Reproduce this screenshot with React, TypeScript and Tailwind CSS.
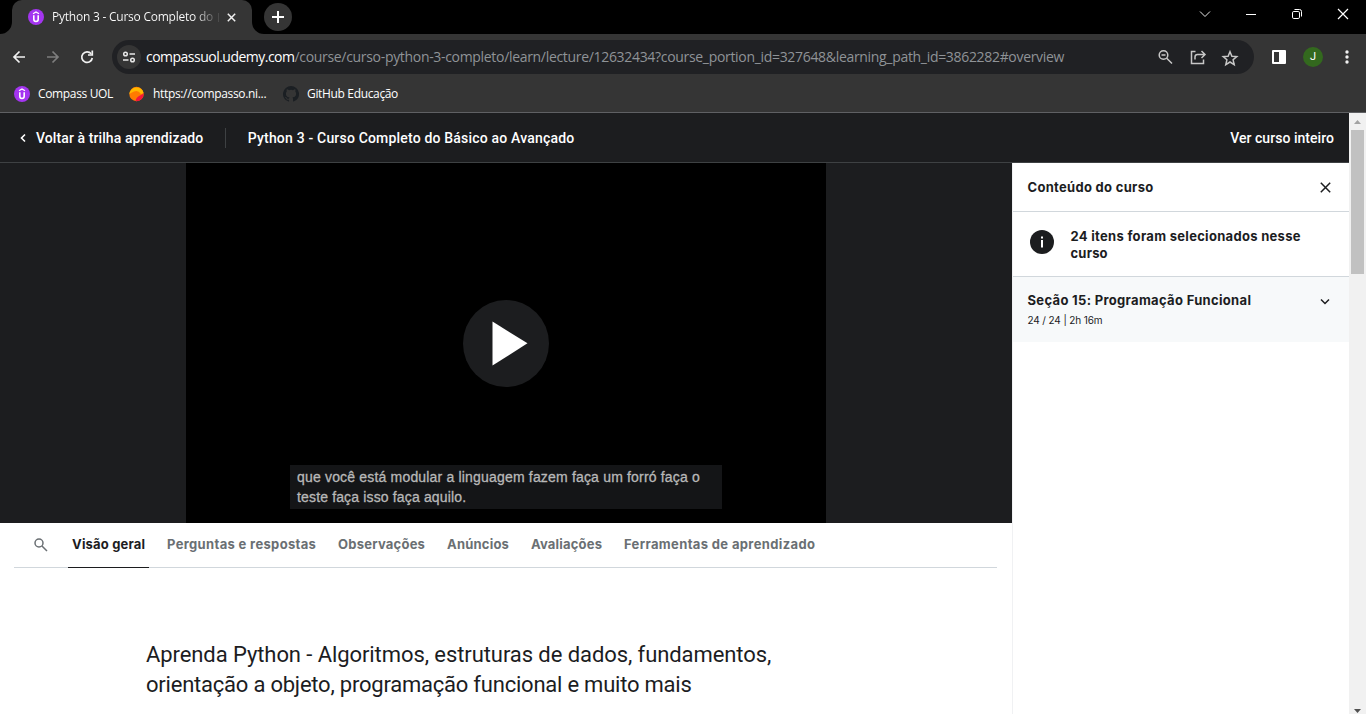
import type { ReactNode } from "react";

function Label({ className, children }: { className?: string; children: ReactNode }) {
  return <span className={"whitespace-nowrap " + (className ?? "")}>{children}</span>;
}

function UdemyBadge() {
  return (
    <svg width="16" height="16" viewBox="0 0 16 16" className="shrink-0">
      <circle cx="8" cy="8" r="8" fill="#a435f0" />
      <path d="M5 4.700 8 3l3 1.700" stroke="#fff" strokeWidth="1.300" fill="none" />
      <path d="M5.800 6.300v4a2.200 2.200 0 0 0 4.400 0v-4" stroke="#fff" strokeWidth="1.600" fill="none" />
    </svg>
  );
}

function TabStrip() {
  return (
    <div className="flex h-[34px] shrink-0 items-stretch bg-black">
      <svg width="12" height="34" className="shrink-0"><path d="M12 34V22A12 12 0 0 1 0 34z" fill="#353535" /></svg>
      <div className="flex w-[240px] items-center rounded-t-[10px] bg-[#353535] pl-4">
        <UdemyBadge />
        <div className="ml-2 flex w-[168px] items-center bg-gradient-to-r from-white from-85% to-[#353535] bg-clip-text font-['Open_Sans',sans-serif] text-[12px] leading-[18px] text-transparent">
          <Label className="tracking-[-0.235px]">Python 3 - Curso Completo do</Label>
        </div>
        <div className="-ml-[2px] h-[9px] w-px bg-[#4c4c4c]" />
        <svg width="9" height="9" viewBox="0 0 9 9" className="ml-[8px] shrink-0"><path d="M.8.8l7.4 7.4M8.2.8L.8 8.2" stroke="#f1f1f1" strokeWidth="1.500" /></svg>
      </div>
      <svg width="12" height="34" className="shrink-0"><path d="M0 34V22A12 12 0 0 0 12 34z" fill="#353535" /></svg>
      <div className="mt-[3px] flex size-7 items-center justify-center rounded-full bg-[#353535]">
        <svg width="12" height="12"><path d="M6 0v12M0 6h12" stroke="#fff" strokeWidth="2" /></svg>
      </div>
      <div className="ml-auto flex items-center pb-[6px]">
        <svg width="46" height="28" fill="none" stroke="#e8e8e8"><path d="M18 11.500l5 5 5-5" /></svg>
        <svg width="46" height="28" fill="none" stroke="#fff"><path d="M18 14.500h10" /></svg>
        <svg width="46" height="28" fill="none" stroke="#fff"><rect x="18.500" y="11.500" width="7" height="7" rx="1.300" /><path d="M20.500 9.500h5a2 2 0 0 1 2 2v5" /></svg>
        <svg width="46" height="28" fill="none" stroke="#fff" strokeWidth="1.200"><path d="M18 9l10 10M28 9l-10 10" /></svg>
      </div>
    </div>
  );
}

function AddressBar() {
  return (
    <div className="flex h-[46px] shrink-0 items-center bg-[#353535]">
      <svg width="112" height="46" fill="none" stroke="#f1f1f1" strokeWidth="1.700">
        <path d="M25 23H14.500M19.500 17.500L14 23l5.500 5.500" />
        <path d="M47 23h10.500M52.500 17.500L58 23l-5.500 5.500" stroke="#7e7e7e" />
        <path d="M91.200 19.800A5.300 5.300 0 1 0 92.300 24" /><path d="M88 21h4.300v-4.500" />
      </svg>
      <div className="flex h-[34px] w-[1142px] items-center rounded-full bg-[#202124] pl-[5px]">
        <div className="flex size-6 items-center justify-center rounded-full bg-[#353535]">
          <svg width="14" height="12" fill="none" stroke="#e8e8e8" strokeWidth="1.500"><circle cx="3.500" cy="3" r="1.800" /><path d="M7.500 3h5.500M1 9h5.500" /><circle cx="10.500" cy="9" r="1.800" /></svg>
        </div>
        <div className="ml-[5px] flex font-['Open_Sans',sans-serif] text-[14px] leading-5">
          <Label className="tracking-[-0.515px] text-white">compassuol.udemy.com</Label>
          <Label className="tracking-[-0.316px] text-[#8f9397]">/course/curso-python-3-completo/learn/lecture/12632434?course_portion_id=327648&learning_path_id=3862282#overview</Label>
        </div>
        <svg width="90" height="34" className="ml-auto mr-[10px]" fill="none" stroke="#c7c7c7" strokeWidth="1.500">
          <circle cx="9.500" cy="15" r="4.300" /><path d="M7.500 15h4M12.700 18.200l5.300 5.300" />
          <path d="M41.500 11.500h-4v12h12v-4M41 19.500v-2.500a2.500 2.500 0 0 1 2.500-2.500H50M47.500 11l3.500 3.500-3.500 3.500" />
          <path d="M76 11.700l1.900 4.500 4.900.4-3.700 3.200 1.100 4.800L76 22l-4.200 2.600 1.100-4.800-3.700-3.200 4.900-.4z" />
        </svg>
      </div>
      <svg width="14" height="14" className="ml-[18px]"><rect width="14" height="14" rx="1" fill="#fff" /><rect x="2" y="2" width="5" height="10" fill="#353535" /></svg>
      <div className="ml-[17px] flex size-5 items-center justify-center rounded-full bg-[#33691e] font-['Roboto',sans-serif] text-[11px] text-white">J</div>
      <svg width="4" height="14" className="ml-[22px]" fill="#f1f1f1"><circle cx="2" cy="2" r="1.700" /><circle cx="2" cy="7" r="1.700" /><circle cx="2" cy="12" r="1.700" /></svg>
    </div>
  );
}

function Bookmarks() {
  return (
    <div className="flex h-[33px] shrink-0 items-start border-b border-[#5f6063] bg-[#353535] pl-[14px] pt-[6px] font-['Open_Sans',sans-serif] text-[12px] leading-4 text-white">
      <div className="flex w-[115px] gap-2"><UdemyBadge /><Label className="tracking-[-0.345px]">Compass UOL</Label></div>
      <div className="flex w-[154px] gap-[9px]">
        <svg width="15" height="16" viewBox="0 0 15 16"><circle cx="7.500" cy="8" r="7.200" fill="#ff7a00" /><path d="M.4 8A7.200 7.200 0 0 1 14.600 7L12 8Q9 3.500 5 5.500 2 6.500.4 8z" fill="#ffb800" /><path d="M14.700 7.500A7.200 7.200 0 0 1 6.500 15.100Q7 11 11 9.500z" fill="#f5163b" /></svg>
        <Label className="tracking-[-0.34px]">https://compasso.ni...</Label>
      </div>
      <div className="flex gap-2">
        <svg width="16" height="16" viewBox="0 0 16 16" fill="#1b1f23"><path d="M8 0a8 8 0 0 0-2.530 15.590c.4.070.55-.17.55-.38v-1.490c-2.010.37-2.530-.49-2.690-.94-.09-.23-.48-.94-.82-1.130-.28-.15-.68-.52-.01-.53.630-.01 1.080.58 1.230.82.720 1.210 1.870.87 2.330.66.070-.52.280-.87.510-1.070-1.780-.2-3.640-.89-3.640-3.950 0-.87.310-1.590.82-2.150-.08-.2-.36-1.020.08-2.120 0 0 .67-.21 2.200.82a7.400 7.400 0 0 1 4 0c1.530-1.040 2.200-.82 2.200-.82.440 1.100.16 1.920.08 2.120.51.560.82 1.270.82 2.150 0 3.070-1.870 3.750-3.650 3.950.29.250.54.730.54 1.480v2.200c0 .21.150.46.550.38A8 8 0 0 0 8 0z" /></svg>
        <Label className="tracking-[-0.342px]">GitHub Educação</Label>
      </div>
    </div>
  );
}

function CourseHeader() {
  return (
    <header className="flex h-[50px] shrink-0 items-center border-b border-[#3e4143] bg-[#1c1d1f] pl-5 pr-[15px] font-['Roboto',sans-serif] text-[14px] font-medium leading-5 text-white">
      <svg width="6" height="10" fill="none" stroke="#fff" strokeWidth="1.600"><path d="M5 1.500L1.500 5 5 8.500" /></svg>
      <Label className="ml-[10px] tracking-[0.09px]">Voltar à trilha aprendizado</Label>
      <div className="ml-[22px] h-5 w-px bg-[#3e4143]" />
      <Label className="ml-[21.500px] tracking-[0.185px]">Python 3 - Curso Completo do Básico ao Avançado</Label>
      <Label className="ml-auto tracking-[0.04px]">Ver curso inteiro</Label>
    </header>
  );
}

function Player() {
  return (
    <div className="flex h-[360px] shrink-0 justify-center bg-[#1c1d1f]">
      <div className="relative flex w-[640px] items-center justify-center bg-black">
        <svg width="86" height="87"><ellipse cx="43" cy="43.500" rx="43" ry="43.500" fill="#1c1d1f" /><path d="M29.500 21.500v44l35-22.200z" fill="#fff" /></svg>
        <div className="absolute left-[104px] top-[302px] flex h-[44px] w-[432px] flex-col items-start bg-[#141517] pl-[7px] pt-[2px] font-['Liberation_Sans',sans-serif] text-[14px] leading-5 text-[#b8b8b8] [-webkit-text-stroke:0.3px_#b8b8b8]">
          <Label className="tracking-[0.18px]">que você está modular a linguagem fazem faça um forró faça o</Label>
          <Label className="tracking-[0.15px]">teste faça isso faça aquilo.</Label>
        </div>
      </div>
    </div>
  );
}

function Tabs() {
  return (
    <nav className="mx-[14px] flex h-[45px] w-[983px] shrink-0 items-stretch border-b border-[#d1d7dc] font-['Inter',sans-serif] text-[13px] font-bold leading-[43px] text-[#6a6f73]">
      <svg width="54" height="44" fill="none" stroke="#6a6f73" strokeWidth="1.500"><circle cx="25" cy="20" r="4" /><path d="M28 23l5 5" /></svg>
      <div className="-mb-px w-[81px] border-b border-[#1c1d1f] px-1 text-[#1c1d1f]"><Label className="tracking-[0.17px]">Visão geral</Label></div>
      <div className="ml-[18px] flex gap-[22px]">
        <Label className="w-[149px] tracking-[0.34px]">Perguntas e respostas</Label>
        <Label className="w-[87px] tracking-[0.23px]">Observações</Label>
        <Label className="w-[62px] tracking-[0.21px]">Anúncios</Label>
        <Label className="w-[71px] tracking-[0.19px]">Avaliações</Label>
        <Label className="w-[192px] tracking-[0.36px]">Ferramentas de aprendizado</Label>
      </div>
    </nav>
  );
}

function Sidebar() {
  return (
    <aside className="flex w-[337px] shrink-0 flex-col border-l border-[#f0f1f3] bg-white font-['Inter',sans-serif] text-[13px] font-bold text-[#1c1d1f]">
      <div className="flex h-[49px] items-center justify-between border-b border-[#d1d7dc] pl-[14.500px] pr-[18px] pt-px">
        <Label className="tracking-[0.3px]">Conteúdo do curso</Label>
        <svg width="11" height="11" fill="none" stroke="#1c1d1f" strokeWidth="1.500"><path d="M.8.8l9.400 9.400M10.200.8L.8 10.200" /></svg>
      </div>
      <div className="flex h-[65px] border-b border-[#d1d7dc] pl-[16.500px] pt-4 leading-[17px]">
        <svg width="24" height="24" className="mt-[2px]"><circle cx="12" cy="12" r="12" fill="#1c1d1f" /><path d="M11 6.500h2v2h-2zM11 10h2v7.500h-2z" fill="#fff" /></svg>
        <div className="ml-[17px] flex flex-col items-start"><Label className="tracking-[0.3px]">24 itens foram selecionados nesse</Label><Label className="tracking-[0.2px]">curso</Label></div>
      </div>
      <div className="flex h-[65px] justify-between bg-[#f7f9fa] pl-[14.500px] pr-[19px] pt-[13px]">
        <div className="flex flex-col items-start">
          <Label className="leading-5 tracking-[0.325px]">Seção 15: Programação Funcional</Label>
          <Label className="mt-[1px] text-[10px] font-normal leading-[18px] tracking-[-0.12px]">24 / 24 | 2h 16m</Label>
        </div>
        <svg width="10" height="8" className="mt-[8px]" fill="none" stroke="#1c1d1f" strokeWidth="1.500"><path d="M1 1.500l4 4 4-4" /></svg>
      </div>
    </aside>
  );
}

export default function App() {
  return (
    <div className="flex h-[714px] w-[1366px] flex-col overflow-hidden bg-white">
      <TabStrip />
      <AddressBar />
      <Bookmarks />
      <div className="flex min-h-0 flex-1">
        <div className="flex w-[1349px] flex-col">
          <CourseHeader />
          <div className="flex min-h-0 flex-1">
            <main className="flex w-[1012px] flex-col">
              <Player />
              <Tabs />
              <div className="flex flex-col items-start pl-[146px] pt-[72px] font-['Roboto',sans-serif] text-[22px] leading-[30px] text-[#1c1d1f]">
                <Label className="tracking-[-0.08px]">Aprenda Python - Algoritmos, estruturas de dados, fundamentos,</Label>
                <Label className="tracking-[-0.22px]">orientação a objeto, programação funcional e muito mais</Label>
              </div>
            </main>
            <Sidebar />
          </div>
        </div>
        <div className="flex w-[17px] flex-col items-center bg-[#f1f1f1]">
          <svg width="17" height="17"><path d="M5 11l3.500-4 3.500 4z" fill="#a3a3a3" /></svg>
          <div className="h-[144px] w-[13px] bg-[#c1c1c1]" />
          <svg width="17" height="17" className="mt-auto"><path d="M5 12h7l-3.500 4z" fill="#505050" /></svg>
        </div>
      </div>
    </div>
  );
}
